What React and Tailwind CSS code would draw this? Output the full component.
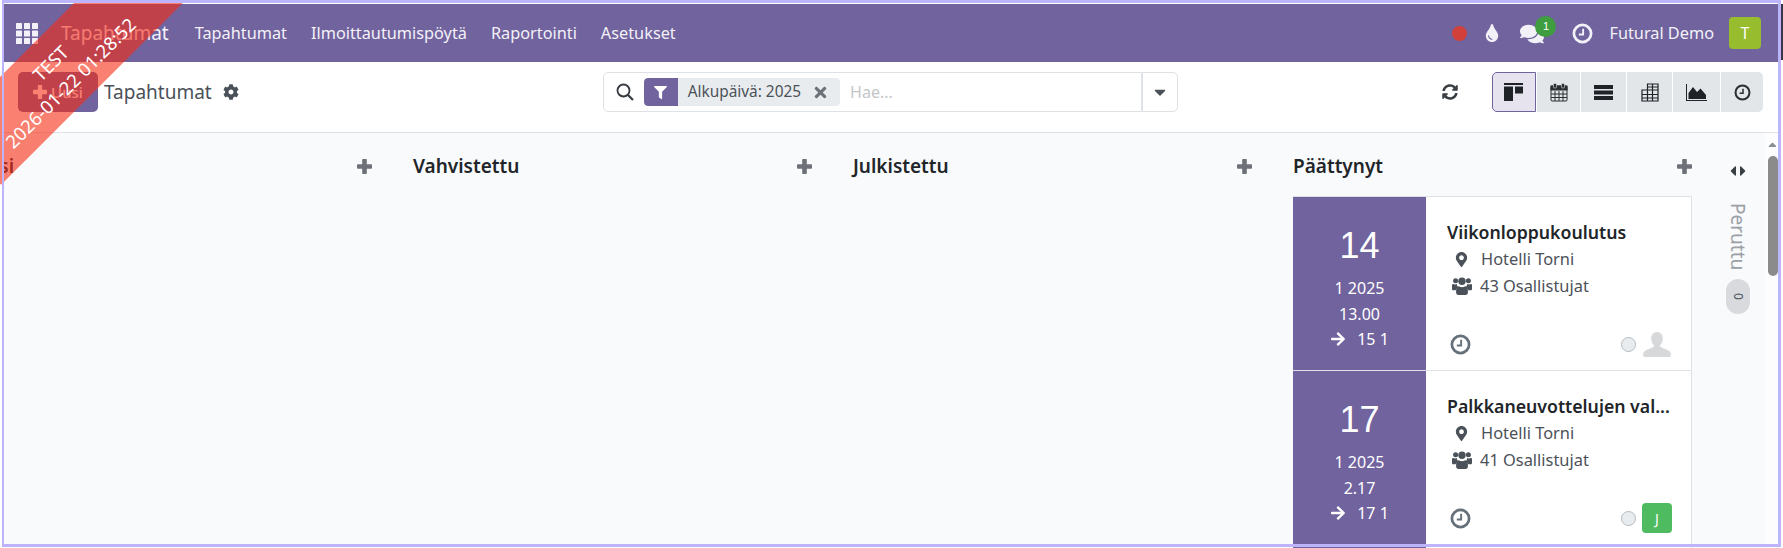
import React from "react";
import { FaCog, FaFilter, FaTimes, FaCaretDown, FaTint, FaComments, FaMapMarkerAlt, FaArrowRight, FaCaretLeft, FaCaretRight, FaCaretUp } from "react-icons/fa";

function Clock({ size = 18, color = "currentColor", sw = 2.6 }) {
  return (
    <svg width={size} height={size} viewBox="0 0 20 20" fill="none">
      <circle cx="10" cy="10" r="8.2" stroke={color} strokeWidth={sw} />
      <path d="M10.6 5.5V10.9H6.5" stroke={color} strokeWidth="1.8" />
    </svg>
  );
}

function Plus({ size = 15, color = "#6d7278" }) {
  return (
    <svg width={size} height={size} viewBox="0 0 15 15" fill={color}>
      <rect x="5.200" y="0" width="4.600" height="15" rx="0.8" />
      <rect x="0" y="5.200" width="15" height="4.600" rx="0.8" />
    </svg>
  );
}

function UsersShape() {
  return (
    <svg width="20" height="18" viewBox="0 0 20 18" fill="#4b5158">
      <circle cx="3.600" cy="3.800" r="2.500" />
      <circle cx="16.400" cy="3.800" r="2.500" />
      <circle cx="10" cy="4.200" r="3.700" />
      <path d="M0 8.500C0 7.300 1 6.900 2 7.200c1 .4 2 .4 3-.1-.2 1.300.3 2.400 1.200 3.300-1.400.6-2.200 1.500-2.500 2.800H1.500C.5 13.200 0 12.700 0 11.900zM20 8.500c0-1.200-1-1.600-2-1.300-1 .4-2 .4-3-.1.2 1.300-.3 2.400-1.200 3.300 1.400.6 2.200 1.500 2.500 2.800h2.200c1 0 1.500-.5 1.500-1.300z" />
      <path d="M6.800 9.300c2 1.300 4.400 1.300 6.400 0 1.800.3 2.700 1.700 2.700 3.900v2.300c0 1.500-.9 2.500-2.400 2.500H6.500c-1.500 0-2.400-1-2.400-2.500v-2.300c0-2.200.9-3.600 2.700-3.900z" />
    </svg>
  );
}

function Grid() {
  return (
    <svg width="22" height="21" viewBox="0 0 22 21" fill="#f3f1f8">
      {[0, 8, 16].map((x) => [0, 7.5, 15].map((y) => <rect key={x + "-" + y} x={x} y={y} width="6" height="6" rx="0.6" />))}
    </svg>
  );
}

function SearchIcon() {
  return (
    <svg width="18" height="18" viewBox="0 0 18 18" fill="none" stroke="#343a40" strokeWidth="1.800">
      <circle cx="7.500" cy="7.500" r="6" />
      <path d="M12 12l5 5" strokeWidth="2.200" />
    </svg>
  );
}

function UserShape() {
  return (
    <svg width="28" height="25" viewBox="0 0 28 25" fill="#d6d8da">
      <path d="M14 0c3.800 0 5.800 3 5.800 6.500 0 3-1.300 5.700-3 7 .2 1.500 2 2.300 4.500 3.200 3 1.100 6.200 2.300 6.700 5.300.2 1.700-.6 3-2.500 3H2.500C.6 25-.2 23.700 0 22c.5-3 3.700-4.200 6.700-5.300 2.500-.9 4.300-1.700 4.500-3.200-1.700-1.300-3-4-3-7C8.200 3 10.200 0 14 0z" />
    </svg>
  );
}

function KanbanIcon() {
  return (
    <svg width="20" height="18" viewBox="0 0 20 18" fill="#1f2328">
      <rect x="0" y="0" width="19" height="2" />
      <rect x="0" y="3.500" width="9" height="14.500" />
      <rect x="11" y="3.500" width="8" height="7" />
    </svg>
  );
}
function CalIcon() {
  return (
    <svg width="18" height="19" viewBox="0 0 18 19" fill="none" stroke="#2b2f33" strokeWidth="1">
      <rect x="1" y="3" width="16" height="15" rx="1" fill="#e2e6e8" />
      <rect x="1" y="3" width="16" height="4" fill="#2b2f33" />
      <path d="M5 8v10M9 8v10M13 8v10M1 11h16M1 14.500h16" />
      <rect x="3.500" y="0.500" width="3" height="4.500" rx="1" fill="#2b2f33" stroke="#e2e6e8" strokeWidth="0.6" />
      <rect x="11.500" y="0.500" width="3" height="4.500" rx="1" fill="#2b2f33" stroke="#e2e6e8" strokeWidth="0.6" />
    </svg>
  );
}
function ListIcon() {
  return (
    <svg width="19" height="15" viewBox="0 0 19 15" fill="#1f2328">
      <rect y="0" width="19" height="4" />
      <rect y="5.500" width="19" height="4" />
      <rect y="11" width="19" height="4" />
    </svg>
  );
}
function PivotIcon() {
  return (
    <svg width="18" height="19" viewBox="0 0 18 19" fill="none" stroke="#1f2328" strokeWidth="1.200">
      <path d="M6.500 1H17V18H1V7H6.500ZM6.500 7H17M1 11.500H17M1 15H17M6.500 7V18M11.500 1V18M6.500 4H17" />
    </svg>
  );
}
function AreaIcon() {
  return (
    <svg width="21" height="17" viewBox="0 0 21 17" fill="#1f2328">
      <path d="M0 0h1v16h20v1H0z" />
      <path d="M2.500 15V9L7 3l4 5 3.500-3.500L20 11v4z" />
    </svg>
  );
}

function Card({ day, time, end, title, count, avatar, tall }) {
  return (
    <div className={"flex shrink-0 " + (tall ? "h-[200px]" : "h-[174px] border-b border-[#dee2e6]")}>
      <div className="w-[133px] shrink-0 bg-[#71639e] text-white flex flex-col items-center pt-[32px]">
        <div className="text-[36px] leading-[34px] font-['Liberation_Sans',sans-serif]">{day}</div>
        <div className="text-[16px] leading-[26px] mt-[12px]">1 2025</div>
        <div className="text-[16px] leading-[26px]">{time}</div>
        <div className="text-[16px] leading-[26px] flex items-center gap-[11px] -mt-[1px]">
          <FaArrowRight className="text-[16px]" />
          <span>{end}</span>
        </div>
      </div>
      <div className="flex-1 min-w-0 bg-white border-r border-[#dee2e6] pl-[21px] pr-[19px] pt-[22px] flex flex-col">
        <div className="text-[17.700px] leading-[26px] font-semibold text-[#212529] whitespace-nowrap truncate">{title}</div>
        <div className="flex items-center text-[16.400px] leading-[26px] text-[#4b5158] mt-px">
          <span className="w-[34px] flex justify-center pr-[5px] text-[#4b5158]"><FaMapMarkerAlt className="text-[15px]" /></span>
          Hotelli Torni
        </div>
        <div className="flex items-center text-[16.400px] leading-[26px] text-[#4b5158] mt-px">
          <span className="w-[33px] pl-[5px] flex"><UsersShape /></span>
          {count} Osallistujat
        </div>
        <div className="mt-[30px] flex items-center justify-between h-[30px]">
          <span className="pl-[3px]"><Clock size={21} color="#66707a" /></span>
          <div className="flex items-center gap-[6px]">
            <span className="w-[15px] h-[15px] rounded-full bg-[#e9ecef] border border-[#b5bbc0]" />
            {avatar ? (
              <span className="w-[30px] h-[30px] rounded-[4px] bg-[#4fbb60] text-white text-[14px] flex items-center justify-center">{avatar}</span>
            ) : (
              <span className="w-[30px] h-[30px] flex items-center justify-center overflow-hidden"><UserShape /></span>
            )}
          </div>
        </div>
      </div>
    </div>
  );
}

function ColHead({ title }) {
  return (
    <div className="flex items-center justify-between h-[28px]">
      <span className="text-[19px] leading-[28px] font-semibold text-[#212529]">{title}</span>
      <Plus />
    </div>
  );
}

const views = [
  [KanbanIcon, "w-[44px] bg-[#e6e3ef] border border-[#71639e] rounded-l-[5px]"],
  [CalIcon, "w-[43px] bg-[#e2e6e8]"],
  [ListIcon, "w-[45px] bg-[#e2e6e8]"],
  [PivotIcon, "w-[45px] bg-[#e2e6e8]"],
  [AreaIcon, "w-[47px] bg-[#e2e6e8]"],
  [() => <Clock size={17} color="#2b2f33" sw={2.4} />, "w-[42px] bg-[#e2e6e8] rounded-r-[5px]"],
];

export default function App() {
  return (
    <div className="relative w-[1783px] h-[548px] overflow-hidden bg-white font-['Noto_Sans',sans-serif] text-[16px]">
      <div className="pt-[4px] pl-[4px] pr-[5px] h-full flex flex-col">
        {/* navbar */}
        <div className="h-[58px] shrink-0 bg-[#71639e] text-white flex items-center pl-[12px]">
          <Grid />
          <span className="ml-[23px] text-[19px] text-[#f3f1f8] pt-[1px]">Tapahtumat</span>
          <nav className="flex items-center ml-[26px] gap-[24px] text-[16.300px] text-[#f3f1f8] pt-[1px]">
            <span>Tapahtumat</span>
            <span>Ilmoittautumispöytä</span>
            <span>Raportointi</span>
            <span>Asetukset</span>
          </nav>
          <div className="ml-auto flex items-center pr-[17px]">
            <span className="w-[15px] h-[15px] rounded-full bg-[#d1403a]" />
            <FaTint className="ml-[16px] text-[18px] text-[#f3f1f8]" />
            <span className="relative ml-[19px] mt-[2px]">
              <FaComments className="text-[24px] text-[#f3f1f8]" />
              <span className="absolute -top-[6px] left-[15px] w-[21px] h-[21px] rounded-full bg-[#3d9d3f] text-white text-[11px] flex items-center justify-center font-['Liberation_Sans',sans-serif]">1</span>
            </span>
            <span className="ml-[28px]"><Clock size={21} color="#f3f1f8" /></span>
            <span className="ml-[16px] text-[16.300px] text-[#f3f1f8]">Futural Demo</span>
            <span className="ml-[15px] w-[32px] h-[32px] rounded-[4px] bg-[#97bc2d] text-white text-[16px] flex items-center justify-center">T</span>
          </div>
        </div>
        {/* control panel */}
        <div className="h-[71px] shrink-0 bg-white border-b border-[#dee2e6] flex items-center pb-[10px]">
          <button className="ml-[14px] w-[80px] h-[40px] rounded-[5px] bg-[#71639e] text-white flex items-center justify-center gap-[4px] text-[15px] font-medium">
            <Plus size={14} color="#ffffff" /> Uusi
          </button>
          <span className="ml-[6px] text-[19px] text-[#4b5158]">Tapahtumat</span>
          <FaCog className="ml-[11px] text-[16px] text-[#4b5158]" />
          <div className="ml-[364px] w-[575px] h-[40px] rounded-[5px] border border-[#dee2e6] flex items-center">
            <span className="ml-[12px] flex"><SearchIcon /></span>
            <span className="ml-[10px] flex h-[28px] items-center rounded-[4px] bg-[#e9ecef] overflow-hidden">
              <span className="w-[34px] h-full bg-[#71639e] rounded-l-[4px] flex items-center justify-center"><FaFilter className="text-[13px] text-white" /></span>
              <span className="ml-[10px] text-[15.400px] text-[#4b5158]">Alkupäivä: 2025</span>
              <FaTimes className="ml-[11px] mr-[11px] text-[17px] text-[#6d7278]" />
            </span>
            <span className="ml-[10px] text-[16px] text-[#c4c7ca]">Hae...</span>
            <span className="ml-auto w-[36px] h-full border-l-2 border-[#dee2e6] flex items-center justify-center"><FaCaretDown className="text-[18px] text-[#4b5158]" /></span>
          </div>
          <svg className="ml-[264px]" width="16" height="16" viewBox="0 0 512 512" fill="#3a3f44"><path d="M370.700 133.300C339.500 104 298.900 88 255.800 88c-77.500.1-144.300 53.200-162.800 126.900-1.300 5.400-6.100 9.200-11.700 9.200H24.100c-7.500 0-13.200-6.800-11.800-14.200C33.900 94.900 134.800 8 256 8c66.400 0 126.800 26.100 171.300 68.700L463 41C478.100 25.900 504 36.600 504 57.900V192c0 13.300-10.700 24-24 24H345.900c-21.400 0-32.100-25.900-17-41l41.800-41.700zM32 296h134.100c21.400 0 32.100 25.900 17 41l-41.800 41.800c31.300 29.300 71.800 45.300 114.900 45.200 77.400-.1 144.300-53.100 162.800-126.800 1.300-5.400 6.100-9.200 11.700-9.200h57.300c7.500 0 13.200 6.800 11.800 14.200C478.100 417.100 377.200 504 256 504c-66.400 0-126.800-26.100-171.300-68.700L49 471C33.900 486.100 8 475.400 8 454.100V320c0-13.300 10.700-24 24-24z"/></svg>
          <div className="ml-auto mr-[15px] flex h-[40px] gap-px">
            {views.map(([I, c], i) => (
              <span key={i} className={"flex items-center justify-center " + c}><I /></span>
            ))}
          </div>
        </div>
        {/* kanban */}
        <div className="flex-1 min-h-0 bg-[#f9fafb] flex overflow-hidden">
          <div className="flex-1 min-w-0 overflow-hidden flex pt-[19px]">
            <div className="-ml-[31px] flex gap-[41px] shrink-0">
              <div className="w-[399px] shrink-0"><ColHead title="Uusi" /></div>
              <div className="w-[399px] shrink-0"><ColHead title="Vahvistettu" /></div>
              <div className="w-[399px] shrink-0"><ColHead title="Julkistettu" /></div>
              <div className="w-[399px] shrink-0 flex flex-col">
                <ColHead title="Päättynyt" />
                <div className="mt-[16px] border-t border-[#dee2e6]">
                  <Card day="14" time="13.00" end="15 1" title="Viikonloppukoulutus" count="43" />
                  <Card day="17" time="2.17" end="17 1" title="Palkkaneuvottelujen val..." count="41" avatar="J" tall />
                </div>
              </div>
            </div>
          </div>
          <div className="w-[86px] shrink-0 flex bg-[#f9fafb]">
            <div className="w-[73px] flex flex-col items-center pt-[30px] pl-[19px]">
              <div className="flex text-[#3a3f44] text-[16px] -space-x-[6px]"><FaCaretLeft /><FaCaretRight /></div>
              <span className="mt-[24px] text-[19px] leading-[20px] text-[#9aa0a6] [writing-mode:vertical-rl]">Peruttu</span>
              <span className="mt-[9px] w-[24px] h-[35px] rounded-full bg-[#d8dadd] text-[12px] text-[#4b5158] flex items-center justify-center [writing-mode:vertical-rl]">0</span>
            </div>
            <div className="w-[13px] bg-[#fdfdfd] flex flex-col items-end pt-[5px]">
              <FaCaretUp className="text-[13px] text-[#8b8f93] mr-[-1px]" />
              <div className="mt-[5px] w-[10px] h-[120px] rounded-full bg-[#8b8b8b]" />
            </div>
          </div>
        </div>
      </div>

      {/* ribbon */}
      <div className="absolute left-0 top-0 w-[200px] h-[200px] overflow-hidden pointer-events-none">
        <div className="absolute left-[-70px] top-[13px] w-[300px] h-[77px] -rotate-45 bg-[rgba(247,43,20,0.6)] text-white text-[18.500px] leading-[28px] text-center pt-[12px] pr-[58px] whitespace-nowrap">
          <div>TEST</div>
          <div>2026-01-22 01:28:52</div>
        </div>
      </div>
      {/* capture frame */}
      <div className="absolute left-[2px] top-0 w-[1779px] h-[547px] border-[#bdb5fb] border-t-[3px] border-l-[2px] border-r-[3px] border-b-[3px] pointer-events-none" />
      <div className="absolute left-[1781px] top-[4px] w-[2px] h-[56px] bg-[#3a3548] pointer-events-none" />
    </div>
  );
}
